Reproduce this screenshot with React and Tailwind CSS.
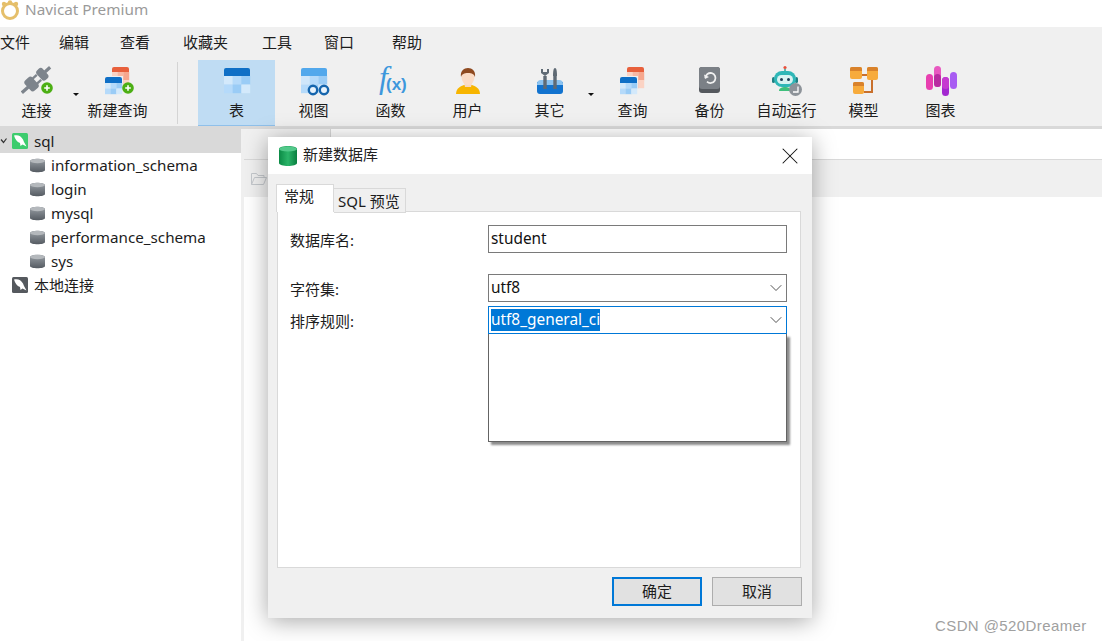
import { ChevronDown, X } from "lucide-react";

const menus = [
  { label: "文件", width: "w-[59px]" },
  { label: "编辑", width: "w-[61px]" },
  { label: "查看", width: "w-[63px]" },
  { label: "收藏夹", width: "w-[79px]" },
  { label: "工具", width: "w-[62px]" },
  { label: "窗口", width: "w-[68px]" },
  { label: "帮助", width: "w-[40px]" },
];

const databases = ["information_schema", "login", "mysql", "performance_schema", "sys"];

function Badge() {
  return (
    <g>
      <circle cx="26" cy="23" r="5.8" fill="#4caf14" />
      <path d="M26 20.2v5.6M23.2 23h5.6" stroke="#fff" strokeWidth="1.6" />
    </g>
  );
}

function Grid({ x, y, w, h, top = "#0f6fc6", shades = ["#d3e9fb", "#b5dafa", "#9accf6"], band = 7 }) {
  const cw = w / 3;
  const ch = (h - band) / 2;
  return (
    <g>
      {[0, 1].map((r) =>
        [0, 1, 2].map((c) => (
          <rect
            key={`${r}-${c}`}
            x={x + c * cw}
            y={y + band + r * ch}
            width={cw + 0.2}
            height={ch + 0.2}
            fill={shades[(r + c) % 3]}
          />
        ))
      )}
      <path
        d={`M${x} ${y + band}v-${band - 2}a2 2 0 0 1 2-2h${w - 4}a2 2 0 0 1 2 2v${band - 2}z`}
        fill={top}
      />
    </g>
  );
}

function QueryShape() {
  return (
    <g>
      <Grid
        x={10}
        y={2}
        w={17}
        h={21}
        top="#e8603c"
        shades={["#fbd3c4", "#f8b8a3", "#f6a78e"]}
        band={5}
      />
      <rect x="2" y="11" width="19" height="19" fill="#f0f0f0" />
      <Grid x={3} y={12} w={17} h={17} band={6} />
    </g>
  );
}

function Icon({ name }) {
  const box = { viewBox: "0 0 32 32", className: "w-8 h-8 shrink-0" };
  if (name === "plug") {
    return (
      <svg {...box}>
        <g transform="translate(15 15) rotate(-42)" fill="#7d848c">
          <rect x="-19" y="-1.6" width="9" height="3.2" />
          <rect x="-11" y="-7" width="10" height="14" rx="3" />
          <rect x="-2" y="-4.5" width="6" height="2.4" />
          <rect x="-2" y="2.1" width="6" height="2.4" />
          <rect x="4.5" y="-6.5" width="8" height="13" rx="3" />
          <rect x="12" y="-1.6" width="7" height="3.2" />
        </g>
        <Badge />
      </svg>
    );
  }
  if (name === "newquery") {
    return (
      <svg {...box}>
        <QueryShape />
        <Badge />
      </svg>
    );
  }
  if (name === "table") {
    return (
      <svg {...box}>
        <Grid x={3} y={3} w={26} h={25} band={8} />
      </svg>
    );
  }
  if (name === "view") {
    return (
      <svg {...box}>
        <Grid x={3} y={3} w={26} h={25} top="#52a8ec" shades={["#cfe6fa", "#b5dafa", "#9accf6"]} band={8} />
        <g fill="#e8f3fc" stroke="#1565ad" strokeWidth="2.4">
          <circle cx="15" cy="25" r="4.2" />
          <circle cx="26" cy="25" r="4.2" />
        </g>
      </svg>
    );
  }
  if (name === "func") {
    return (
      <svg viewBox="0 0 36 32" className="w-9 h-8 shrink-0 overflow-visible">
        <text x="6" y="23" fill="#3d97dc" fontSize="32" fontStyle="italic" fontFamily="Liberation Serif, serif">
          f
        </text>
        <text x="13" y="25" fill="#3d97dc" fontSize="17" fontWeight="700" fontFamily="Liberation Sans, sans-serif">
          (x)
        </text>
      </svg>
    );
  }
  if (name === "user") {
    return (
      <svg {...box}>
        <path d="M4 29c0-6 5-8 8-9h8c3 1 8 3 8 9z" fill="#f7b500" />
        <path d="M12 18h8l-1 4h-6z" fill="#f7d8c0" />
        <ellipse cx="16" cy="12" rx="6.5" ry="8" fill="#fbdcc6" />
        <path d="M9 12c-1-6 3-9 7-9s8 3 7 9c-1-3-3-4-7-4s-6 1-7 4z" fill="#8f4a20" />
      </svg>
    );
  }
  if (name === "tools") {
    return (
      <svg {...box}>
        <path d="M3 17h26v9a3 3 0 0 1-3 3H6a3 3 0 0 1-3-3z" fill="#1273cf" />
        <path d="M3 19a4 4 0 0 1 4-4h18a4 4 0 0 1 4 4v1H3z" fill="#8cc3f0" />
        <path d="M11 24V11M21 24V11" stroke="#5f6a74" strokeWidth="3.4" />
        <path d="M7 4v4l4 3 4-3V4l-2 0v3h-4V4z" fill="#5f6a74" />
        <path d="M21 3c-1.5 0-2 3-2 8h4c0-5-.5-8-2-8z" fill="#5f6a74" />
      </svg>
    );
  }
  if (name === "query") {
    return (
      <svg {...box}>
        <QueryShape />
      </svg>
    );
  }
  if (name === "backup") {
    return (
      <svg {...box}>
        <rect x="5" y="2" width="21" height="26" rx="3" fill="#55595e" />
        <rect x="5" y="2" width="21" height="22" rx="3" fill="#7b8086" />
        <path d="M11.5 13a5 5 0 1 1 1.5 3.6" fill="none" stroke="#f0f0f0" strokeWidth="1.8" />
        <path d="M10 9.5l1 4.5 4-2z" fill="#f0f0f0" />
      </svg>
    );
  }
  if (name === "robot") {
    return (
      <svg {...box}>
        <circle cx="14" cy="2.5" r="1.6" fill="#e8503c" />
        <path d="M14 4v3" stroke="#1f9d8f" strokeWidth="1.4" />
        <path d="M8 26c0-3 3-4 6-4s6 1 6 4z" fill="#3fc07c" />
        <rect x="1" y="12" width="3" height="6" rx="1.5" fill="#1f7f83" />
        <rect x="24" y="12" width="3" height="6" rx="1.5" fill="#1f7f83" />
        <rect x="3" y="6" width="22" height="16" rx="8" fill="#2fb7b7" />
        <rect x="6" y="10" width="16" height="9" rx="4.5" fill="#d9f3f2" />
        <circle cx="10.5" cy="14.5" r="1.5" fill="#1d3d55" />
        <circle cx="17.5" cy="14.5" r="1.5" fill="#1d3d55" />
        <circle cx="24.5" cy="24.5" r="6.5" fill="#8d9399" />
        <path d="M27 21.5v5.5h-5" fill="none" stroke="#fff" strokeWidth="1.3" />
      </svg>
    );
  }
  if (name === "model") {
    return (
      <svg {...box}>
        <path d="M13 10h7M24 14v13h-8" fill="none" stroke="#c9702c" strokeWidth="2" />
        <rect x="2" y="2" width="12" height="12" rx="2" fill="#f7ab3c" />
        <path d="M2 6V4a2 2 0 0 1 2-2h8a2 2 0 0 1 2 2v2z" fill="#d9822b" />
        <rect x="19" y="2" width="11" height="13" rx="2" fill="#f7ab3c" />
        <path d="M19 6V4a2 2 0 0 1 2-2h7a2 2 0 0 1 2 2v2z" fill="#d9822b" />
        <rect x="5" y="17" width="11" height="12" rx="2" fill="#f7ab3c" />
        <path d="M5 21v-2a2 2 0 0 1 2-2h7a2 2 0 0 1 2 2v2z" fill="#d9822b" />
      </svg>
    );
  }
  if (name === "chart") {
    return (
      <svg {...box}>
        <rect x="1" y="9" width="7" height="16" rx="3.5" fill="#e83fb0" />
        <rect x="9" y="1" width="7" height="21" rx="3.5" fill="#e858c0" />
        <rect x="17" y="12" width="7" height="19" rx="3.5" fill="#a328d0" />
        <rect x="25" y="7" width="7" height="17" rx="3.5" fill="#a85cf2" />
        <rect x="9" y="9" width="7" height="13" rx="3.5" fill="#b82ca0" />
        <rect x="17" y="12" width="7" height="12" rx="3.5" fill="#c63ad0" />
      </svg>
    );
  }
  return null;
}

function ToolButton({ icon, label, active, width = "w-[77px]" }) {
  return (
    <div
      className={`${width} h-[66px] flex flex-col items-center pt-[5px] shrink-0 ${
        active ? "bg-[#bfdcf3] border-b border-[#8fc0ea]" : ""
      }`}
    >
      <Icon name={icon} />
      <span className="mt-[3px] leading-5 text-[15px] text-[#1c1c1c]">{label}</span>
    </div>
  );
}

function DropArrow() {
  return <div className="w-0 h-0 mt-[33px] border-x-[3px] border-t-[3px] border-x-transparent border-t-[#111]" />;
}

function Dolphin({ color }) {
  return (
    <svg viewBox="0 0 16 16" className="w-4 h-4 shrink-0">
      <rect width="16" height="16" rx="1.5" fill={color} />
      <path d="M2 2.5c4-1 7 .5 9 4l1 2.5 2.5 4.5-4-2-2 1.500-.5-3C5 9 3 6 2 2.500z" fill="#fff" />
    </svg>
  );
}

function DbIcon() {
  return (
    <svg viewBox="0 0 15 15" className="w-[15px] h-[15px] shrink-0">
      <defs>
        <linearGradient id="dbGray" x1="0" x2="0" y1="0" y2="1">
          <stop offset="0" stopColor="#9aa0a6" />
          <stop offset="1" stopColor="#555b62" />
        </linearGradient>
      </defs>
      <path d="M0 3c0-3 15-3 15 0v9c0 3-15 3-15 0z" fill="url(#dbGray)" />
      <ellipse cx="7.5" cy="3" rx="7.5" ry="2.2" fill="#b4b8bc" />
    </svg>
  );
}

function Field({ label, children, className = "" }) {
  return (
    <div className={`flex items-center h-7 ${className}`}>
      <span className="w-[198px] shrink-0 pt-[2px] text-[15px] text-[#1c1c1c]">{label}</span>
      {children}
    </div>
  );
}

function NewDatabaseDialog() {
  return (
    <div className="absolute left-[268px] top-[137px] w-[544px] h-[481px] bg-[#f0f0f0] flex flex-col shadow-[0_3px_22px_rgba(0,0,0,0.35)]">
      {/* title bar */}
      <div className="h-[37px] bg-white flex items-center pl-[11px] pr-2 shrink-0">
        <svg viewBox="0 0 18 20" className="w-[18px] h-5 shrink-0">
          <defs>
            <linearGradient id="dbGreen" x1="0" x2="1" y1="0" y2="0">
              <stop offset="0" stopColor="#0b8a45" />
              <stop offset="0.5" stopColor="#2bb569" />
              <stop offset="1" stopColor="#0a7f40" />
            </linearGradient>
          </defs>
          <path d="M0 3c0-4 18-4 18 0v14c0 4-18 4-18 0z" fill="url(#dbGreen)" />
          <ellipse cx="9" cy="3" rx="9" ry="2.6" fill="#52c98a" />
        </svg>
        <span className="ml-[6px] -mt-[2px] text-[15px] text-[#222]">新建数据库</span>
        <X className="ml-auto w-7 h-7 text-[#111]" strokeWidth={0.9} />
      </div>

      {/* tabs */}
      <div className="flex items-end h-[38px] pl-2 shrink-0 relative z-10">
        <div className="w-[58px] h-[28px] bg-white border border-b-0 border-[#d9d9d9] pl-[7px] text-[15px] leading-[23px] text-[#1c1c1c]">
          常规
        </div>
        <div className="w-[72px] h-[25px] -mb-px bg-[#f0f0f0] border border-[#d9d9d9] border-l-0 pl-[4px] text-[15px] leading-[25px] text-[#1c1c1c]">
          SQL 预览
        </div>
      </div>

      {/* general pane */}
      <div className="ml-[9px] mr-[11px] h-[357px] -mt-px bg-white border border-[#d9d9d9] pl-[12px] pt-[13px] shrink-0">
        <Field label="数据库名:">
          <div className="w-[299px] h-7 border border-[#7a7a7a] pl-[2px] text-[15.4px] leading-[25px] text-[#111]">student</div>
        </Field>
        <Field label="字符集:" className="mt-[21px]">
          <div className="w-[299px] h-7 border border-[#7a7a7a] pl-[2px] flex items-center justify-between text-[15.4px] text-[#111]">
            <span>utf8</span>
            <ChevronDown className="w-5 h-5 text-[#333]" strokeWidth={1} />
          </div>
        </Field>
        <Field label="排序规则:" className="mt-[4px] relative">
          <div className="w-[299px] h-7 border border-[#0078d7] pl-[2px] flex items-center justify-between text-[15.4px]">
            <span className="bg-[#0078d7] text-white leading-[22px] -mt-[1px]">utf8_general_ci</span>
            <ChevronDown className="w-5 h-5 text-[#333]" strokeWidth={1} />
          </div>
          {/* open dropdown list */}
          <div className="absolute left-[198px] top-7 w-[299px] h-[108px] bg-white border border-[#646464] border-t-0 shadow-[3px_3px_2px_rgba(0,0,0,0.45)]" />
        </Field>
      </div>

      {/* buttons */}
      <div className="flex justify-end gap-[10px] pr-[10px] pt-[9px]">
        <button className="w-[90px] h-[29px] bg-[#e1e1e1] border-2 border-[#0078d7] text-[15px] leading-none text-[#1c1c1c]">确定</button>
        <button className="w-[90px] h-[29px] bg-[#e1e1e1] border border-[#adadad] text-[15px] leading-none text-[#1c1c1c]">取消</button>
      </div>
    </div>
  );
}

export default function App() {
  return (
    <div className="relative w-[1102px] h-[641px] overflow-hidden bg-white font-['Noto_Sans','Noto_Sans_CJK_SC',sans-serif]">
      {/* title bar */}
      <div className="h-[27px] flex items-start bg-white">
        <svg viewBox="0 0 20 20" className="w-5 h-5 shrink-0">
          <circle cx="10" cy="11" r="7.5" fill="#fff" stroke="#e5bf6b" strokeWidth="3" />
          <circle cx="4" cy="4" r="2.2" fill="#e5bf6b" />
          <circle cx="10" cy="2.5" r="2.2" fill="#e5bf6b" />
          <circle cx="16" cy="4" r="2.2" fill="#e5bf6b" />
        </svg>
        <span className="ml-[5px] mt-[1px] leading-4 text-[15.3px] text-[#9a9a9a]">Navicat Premium</span>
      </div>

      {/* menu */}
      <div className="h-[33px] pb-[2px] bg-[#f0f0f0] flex items-center text-[15px] text-[#1c1c1c]">
        {menus.map((m) => (
          <span key={m.label} className={`${m.width} shrink-0`}>
            {m.label}
          </span>
        ))}
      </div>

      {/* toolbar */}
      <div className="h-[69px] bg-[#f0f0f0] border-b-[3px] border-[#d9d9d9] flex">
        <ToolButton icon="plug" label="连接" width="w-[73px]" />
        <DropArrow />
        <ToolButton icon="newquery" label="新建查询" />
        <div className="w-px h-[62px] mt-[2px] ml-[21px] mr-[20px] bg-[#d4d4d4] shrink-0" />
        <ToolButton icon="table" label="表" active />
        <ToolButton icon="view" label="视图" />
        <ToolButton icon="func" label="函数" />
        <ToolButton icon="user" label="用户" />
        <div className="w-[5px] shrink-0" />
        <ToolButton icon="tools" label="其它" />
        <DropArrow />
        <ToolButton icon="query" label="查询" />
        <ToolButton icon="backup" label="备份" />
        <ToolButton icon="robot" label="自动运行" />
        <ToolButton icon="model" label="模型" />
        <ToolButton icon="chart" label="图表" />
      </div>

      <div className="flex h-[512px]">
        {/* connection tree */}
        <div className="w-[241px] shrink-0 text-[15.2px] text-[#1c1c1c]">
          <div className="h-6 bg-[#d9d9d9] flex items-center">
            <svg viewBox="0 0 8 8" className="w-2 h-2 mr-[4px] shrink-0">
              <path d="M1 2.5l2.500 3 3-4" fill="none" stroke="#333" strokeWidth="1.2" />
            </svg>
            <Dolphin color="#3dcc6e" />
            <span className="ml-[6px]">sql</span>
          </div>
          {databases.map((db) => (
            <div key={db} className="h-6 flex items-center pl-[30px]">
              <DbIcon />
              <span className="ml-[6px]">{db}</span>
            </div>
          ))}
          <div className="h-6 flex items-center pl-[12px]">
            <Dolphin color="#55595e" />
            <span className="ml-[6px] text-[15px]">本地连接</span>
          </div>
        </div>

        {/* object pane */}
        <div className="flex-1 border-l-[3px] border-[#f0f0f0] flex flex-col">
          <div className="h-[31px] flex border-b border-[#d9d9d9]">
            <div className="w-[87px] bg-[#f0f0f0] border-r border-[#d9d9d9]" />
          </div>
          <div className="h-[37px] bg-[#f0f0f0] flex items-center pl-[7px]">
            <svg viewBox="0 0 16 14" className="w-4 h-[14px]">
              <path d="M.5 12.5V1.5h5l1.5 2h6v2M.5 12.5l3-7h12l-3 7z" fill="none" stroke="#c4c8cc" strokeWidth="1" />
            </svg>
          </div>
        </div>
      </div>

      <NewDatabaseDialog />

      {/* watermark */}
      <span className="absolute left-[935px] top-[615px] text-[15px] tracking-[0.4px] text-[#a0a0a0] font-['Liberation_Sans',sans-serif]">
        CSDN @520Dreamer
      </span>
    </div>
  );
}
